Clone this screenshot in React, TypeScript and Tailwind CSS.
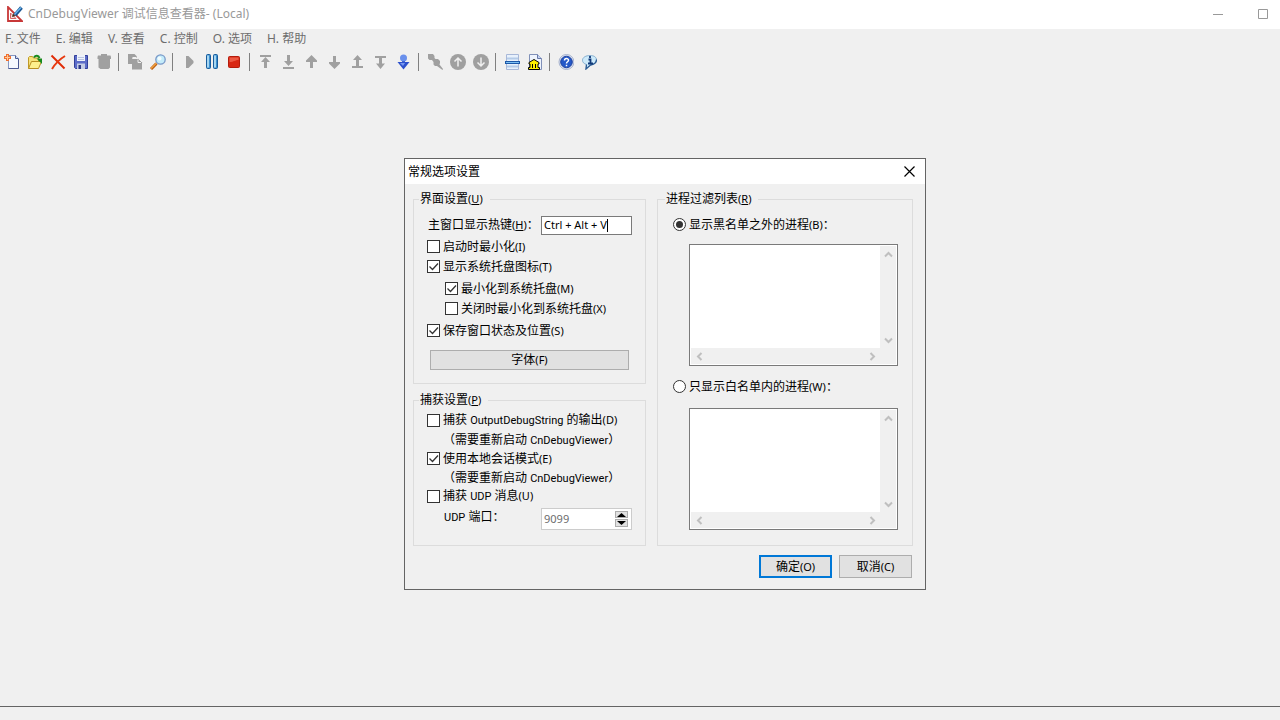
import { useState, type ReactNode } from "react";

const zh = "font-['Noto_Sans','Noto_Sans_CJK_SC',sans-serif]";

// Dialog labels set Latin text one pixel smaller than the Chinese around it.
function En({ children }: { children: ReactNode }) {
  return <span className="text-[11px]">{children}</span>;
}

function Word({ children }: { children: ReactNode }) {
  return <span className="font-['Roboto',sans-serif] text-[11px]">{children}</span>;
}

function Key({ k, line = false }: { k: string; line?: boolean }) {
  return <En>({line ? <u className="underline-offset-1">{k}</u> : k})</En>;
}

/* ---------- toolbar icons, 16x16 ---------- */

function Icon({ children }: { children: ReactNode }) {
  return (
    <svg width="16" height="16" viewBox="0 0 16 16" aria-hidden="true">
      {children}
    </svg>
  );
}

const gray = "#a0a0a0";

const icons: Record<string, ReactNode> = {
  new: (
    <>
      <path d="M4.500 1.500h7l3 3v10h-10z" fill="#f5f9ff" stroke="#8796c0" />
      <path d="M11.500 1.500v3h3" fill="#cfdcf5" stroke="#4a5a94" />
      <path d="M14.500 5v9.500h-10" fill="none" stroke="#4a5a94" />
      <path d="M3.500 0v7M0 3.500h7" stroke="#f07030" strokeWidth="3" />
      <path d="M3.500 1v5M1 3.500h5" stroke="#ffc898" />
    </>
  ),
  open: (
    <>
      <path d="M1.500 14.500v-11l1-1h3l1 1.500h5v3" fill="#f6e27a" stroke="#c09a28" />
      <path d="M1.500 14.500l3-7h10l-3 7z" fill="#fdf08c" stroke="#b88f20" />
      <path d="M7 3.500C8.500 1 11.500 1 12.500 4" fill="none" stroke="#178a1c" strokeWidth="2" />
      <path d="M9.500 4.500H15V10z" fill="#178a1c" />
    </>
  ),
  remove: (
    <>
      <path d="M1.500 1.500l13 13" stroke="#e02c08" strokeWidth="2" />
      <path d="M15 2C10 5 5 10 2 15" fill="none" stroke="#e83a10" strokeWidth="2" />
    </>
  ),
  save: (
    <>
      <path d="M1.500 1.500h13v13h-12l-1-1z" fill="#5c6cc8" stroke="#33409a" />
      <path d="M4 1h8v6H4z" fill="#eef2fb" />
      <path d="M5 3.500h6M5 5.500h6" stroke="#b9c4e0" />
      <path d="M4 9.500h8V15H4z" fill="#c4cce4" />
      <path d="M5.500 11H8v4H5.500z" fill="#2c3888" />
    </>
  ),
  trash: (
    <path d="M5 0h6v1.500h3.500L15 3v2H1.500V3L2 1.500h3zM2.500 5h11.500v8.500L12.500 15h-8L2.500 13.500z" fill={gray} />
  ),
  copy: (
    <>
      <path d="M1 0h6.500L10 2.500V10H1z" fill={gray} />
      <path d="M5.500 4.500h6l4 4v7h-10z" fill={gray} stroke="#f0f0f0" />
      <path d="M5 5h6l4 4v6.500H5z" fill={gray} />
      <path d="M5.500 3.500h4M11 5.500v3h3" fill="none" stroke="#f0f0f0" />
    </>
  ),
  find: (
    <>
      <path d="M1 15l5.500-5.500" stroke="#b85c10" strokeWidth="3" />
      <path d="M1 14.500l5.500-5.500" stroke="#f0a040" strokeWidth="1.500" />
      <circle cx="10.500" cy="5.500" r="4.700" fill="#c4ecfa" stroke="#7898c8" strokeWidth="1.300" />
      <circle cx="9.500" cy="4.500" r="2" fill="#f2fcff" />
    </>
  ),
  play: <path d="M5 2h2.500l5 5v2l-5 5H5z" fill={gray} />,
  pause: (
    <>
      <rect x="2.500" y=".500" width="4" height="14" rx="1" fill="#3c90d0" stroke="#185c9c" />
      <rect x="9.500" y=".500" width="4" height="14" rx="1" fill="#3c90d0" stroke="#185c9c" />
      <path d="M4 1.500v12M11 1.500v12" stroke="#c8ecfc" strokeWidth="1.500" />
    </>
  ),
  stop: (
    <>
      <rect x="1.500" y="2.500" width="11" height="11" rx="1" fill="#d82814" stroke="#b41c0c" />
      <path d="M2.500 8V3.500h9V6C8 6 7 8 2.500 8z" fill="#ec5a44" />
    </>
  ),
  top: <path d="M2 1h11v2H2zM7.500 3L12 8H9v6H6V8H3z" fill={gray} />,
  bottom: <path d="M2 13h11v2H2zM6 1h3v6h3l-4.500 5L3 7h3z" fill={gray} />,
  up: <path d="M7.500 1L13 6.500V8H9v6H6V8H2V6.500z" fill={gray} />,
  down: <path d="M6 2h3v6h4v1.500L7.500 15 2 9.500V8h4z" fill={gray} />,
  prevMark: <path d="M2 12h11v2H2zM7.500 1L12 6H9v6H6V6H3z" fill={gray} />,
  nextMark: <path d="M2 2h11v2H2zM6 4h3v5.500h3L7.500 15 3 9.500h3z" fill={gray} />,
  locate: (
    <>
      <circle cx="7.500" cy="4" r="3.500" fill="#6a90ec" />
      <path d="M6 7h3v3H6z" fill="#4468d4" />
      <path d="M1.500 8h12l-6 7.500z" fill="#2c50cc" />
      <path d="M4 9h5l-2 3z" fill="#7898f0" />
    </>
  ),
  pin: <path d="M1 0h5l1.500 2v2l1 1H11l2 2v2l-.500 1.500L16 15l-.500 1L10 12H8l-1.500-1.500V8L5 6H2.500L1 4.500z" fill={gray} />,
  circleUp: (
    <>
      <circle cx="8" cy="8" r="8" fill={gray} />
      <path d="M8 4v8.500M4.500 7.500L8 4l3.500 3.500" fill="none" stroke="#f0f0f0" strokeWidth="1.500" />
    </>
  ),
  circleDown: (
    <>
      <circle cx="8" cy="8" r="8" fill={gray} />
      <path d="M8 3.500V12M4.500 8.500L8 12l3.500-3.500" fill="none" stroke="#f0f0f0" strokeWidth="1.500" />
    </>
  ),
  split: (
    <>
      <path d="M2.500.500h12v15h-12z" fill="#e8f1fc" stroke="#a8b8d8" />
      <path d="M3 4.500h11M3 12.500h11" stroke="#b4cbe8" strokeWidth="2" />
      <rect x="1.500" y="7.500" width="14" height="2" fill="#7cc0f4" stroke="#1c58a8" />
    </>
  ),
  home: (
    <>
      <path d="M2.500.500h8l4 4v11h-12z" fill="#eef3fc" stroke="#8090b8" />
      <path d="M10.500.500v4h4" fill="#c4d2f0" stroke="#6878a8" />
      <path d="M2 8.500L7 5.500l5 3V10h-1v3.500h1.500v2h-11v-2H3V10H2z" fill="#fff000" stroke="#000" />
      <path d="M5.500 10v4M8.500 10v4" stroke="#000" />
    </>
  ),
  help: (
    <>
      <circle cx="8.500" cy="8" r="7.500" fill="#e6eaf4" stroke="#a4b0cc" />
      <circle cx="8.500" cy="8" r="5.800" fill="#2458c8" stroke="#1c409c" />
      <path d="M6.500 6.500C6.500 4 10.500 4 10.500 6.300c0 1.500-2 1.500-2 3.200M8.500 10.700v1.500" fill="none" stroke="#fff" strokeWidth="1.500" />
    </>
  ),
  about: (
    <>
      <path d="M9 1.500c4 0 6.500 1.600 6.500 4.500S12.500 10.500 9.500 11L5 15l.500-4.500C3 9.700 1.500 8.500 1.500 6.200 1.500 3.300 5 1.500 9 1.500z" fill="#cdeafa" stroke="#88b0d0" />
      <path d="M15.500 5.500c0 3.500-3 5-6 5.500L5 15l.500-4.500" fill="none" stroke="#2c5c94" strokeWidth="1.300" />
      <path d="M9 2v2M7.500 5.500h2v4M7 9.500h5" fill="none" stroke="#103878" strokeWidth="1.800" />
    </>
  ),
};

const toolbar: [string, string][][] = [
  [["new", "新建"], ["open", "打开"], ["remove", "删除"], ["save", "保存"], ["trash", "清空"]],
  [["copy", "复制"], ["find", "查找"]],
  [["play", "开始"], ["pause", "暂停"], ["stop", "停止"]],
  [["top", "首条"], ["bottom", "末条"], ["up", "上一条"], ["down", "下一条"], ["prevMark", "上一组"], ["nextMark", "下一组"], ["locate", "定位"]],
  [["pin", "书签"], ["circleUp", "上一书签"], ["circleDown", "下一书签"]],
  [["split", "分隔"], ["home", "主页"]],
  [["help", "帮助"], ["about", "关于"]],
];

const menus = ["F. 文件", "E. 编辑", "V. 查看", "C. 控制", "O. 选项", "H. 帮助"];

/* ---------- form controls ---------- */

function Check({ children, defaultChecked = false }: { children: ReactNode; defaultChecked?: boolean }) {
  return (
    <label className="flex h-[19px] items-center gap-[3px] whitespace-nowrap">
      <span className="grid">
        <input
          type="checkbox"
          defaultChecked={defaultChecked}
          className="peer col-start-1 row-start-1 size-[13px] appearance-none border border-[#333] bg-white"
        />
        <svg
          viewBox="0 0 13 13"
          className="pointer-events-none invisible col-start-1 row-start-1 size-[13px] peer-checked:visible"
        >
          <path d="M2.500 6.500l3 3 5.500-6" fill="none" stroke="#333" strokeWidth="1.300" />
        </svg>
      </span>
      <span>{children}</span>
    </label>
  );
}

function Radio({ children, checked, onChange }: { children: ReactNode; checked: boolean; onChange: () => void }) {
  return (
    <label className="flex h-[19px] items-center gap-[3px] whitespace-nowrap">
      <span className="grid place-items-center">
        <input
          type="radio"
          name="filter"
          checked={checked}
          onChange={onChange}
          className="peer col-start-1 row-start-1 size-[13px] appearance-none rounded-full border border-[#333] bg-white"
        />
        <span className="pointer-events-none invisible col-start-1 row-start-1 size-[7px] rounded-full bg-[#333] peer-checked:visible" />
      </span>
      <span>{children}</span>
    </label>
  );
}

function Arrow({ d, label }: { d: string; label: string }) {
  return (
    <button type="button" aria-label={label} className="grid size-4 place-items-center">
      <svg width="9" height="9" viewBox="0 0 9 9">
        <path d={d} fill="none" stroke="#bfbfbf" strokeWidth="2" />
      </svg>
    </button>
  );
}

function ListBox({ label }: { label: string }) {
  return (
    <div className="ml-4 grid h-[122px] grid-cols-[1fr_16px] grid-rows-[1fr_16px] border border-[#7a7a7a] bg-white p-px">
      <textarea aria-label={label} className="resize-none bg-white outline-none" />
      <div className="flex flex-col justify-between bg-[#f0f0f0]">
        <Arrow label="向上滚动" d="M1 6.500L4.500 3 8 6.500" />
        <Arrow label="向下滚动" d="M1 2.500L4.500 6 8 2.500" />
      </div>
      <div className="flex justify-between bg-[#f0f0f0]">
        <Arrow label="向左滚动" d="M6.500 1L3 4.500 6.500 8" />
        <Arrow label="向右滚动" d="M2.500 1L6 4.500 2.500 8" />
      </div>
      <div className="bg-[#f0f0f0]" />
    </div>
  );
}

function Group({ title, k, className, children }: { title: string; k: string; className: string; children: ReactNode }) {
  return (
    <fieldset className={`border border-[#dcdcdc] ${className}`}>
      <legend className="-ml-2 h-[18px] pl-px pr-[7px] leading-[18px]">
        {title}
        <Key k={k} line />
      </legend>
      {children}
    </fieldset>
  );
}

function OptionsDialog() {
  const [filter, setFilter] = useState<"black" | "white">("black");
  return (
    <form
      role="dialog"
      aria-label="常规选项设置"
      className="w-[522px] border border-[#646464] bg-[#f0f0f0] text-[12px] leading-[18px] text-black"
    >
      <div className="flex h-[25px] items-center justify-between bg-white pl-[3px] pr-[10px]">
        <h2 className="leading-4">常规选项设置</h2>
        <button type="button" aria-label="关闭">
          <svg width="11" height="11" viewBox="0 0 11 11">
            <path d="M.500.500l10 10M10.500.500l-10 10" stroke="#000" strokeWidth="1.200" />
          </svg>
        </button>
      </div>

      <div className="flex gap-[11px] pl-2 pr-3 pt-[6px]">
        <div className="flex w-[233px] flex-col gap-[7px]">
          <Group title="界面设置" k="U" className="px-[13px] pb-[13px] pt-[7px]">
            <div className="mb-[2px] flex h-5 items-center justify-between">
              <label htmlFor="hotkey" className="whitespace-nowrap pl-px">
                主窗口显示热键
                <Key k="H" line />：
              </label>
              <div className="flex h-[19px] w-[91px] items-center border border-[#7a7a7a] bg-white pl-[2px]">
                <input
                  id="hotkey"
                  defaultValue="Ctrl + Alt + V"
                  className="field-sizing-content text-[11px] outline-none"
                />
                <span className="h-[13px] w-px bg-black" />
              </div>
            </div>
            <div className="flex flex-col gap-px">
              <Check>启动时最小化<Key k="I" /></Check>
              <Check defaultChecked>显示系统托盘图标<Key k="T" /></Check>
              <div className="my-[2px] flex flex-col gap-px pl-[18px]">
                <Check defaultChecked>最小化到系统托盘<Key k="M" /></Check>
                <Check>关闭时最小化到系统托盘<Key k="X" /></Check>
              </div>
              <Check defaultChecked>保存窗口状态及位置<Key k="S" /></Check>
            </div>
            <div className="flex pl-[3px] pr-[3px] pt-[10px]">
              <button type="button" className="h-5 flex-1 border border-[#adadad] bg-[#e1e1e1] leading-[18px]">
                字体<Key k="F" />
              </button>
            </div>
          </Group>

          <Group title="捕获设置" k="P" className="px-[13px] pb-[15px] pt-[2px]">
            <Check>捕获 <Word>OutputDebugString</Word> 的输出<Key k="D" /></Check>
            <p className="h-[19px] whitespace-nowrap pl-4 leading-5">（需要重新启动 <Word>CnDebugViewer</Word>）</p>
            <Check defaultChecked>使用本地会话模式<Key k="E" /></Check>
            <p className="h-[19px] whitespace-nowrap pl-4 leading-5">（需要重新启动 <Word>CnDebugViewer</Word>）</p>
            <Check>捕获 <Word>UDP</Word> 消息<Key k="U" /></Check>
            <div className="mt-[2px] flex items-start justify-between">
              <label htmlFor="port" className="whitespace-nowrap pl-[17px]">
                <Word>UDP</Word> 端口：
              </label>
              <div className="flex h-[22px] w-[91px] items-center border border-[#ccc] bg-white pl-[2px] pr-[3px]">
                <input
                  id="port"
                  disabled
                  defaultValue="9099"
                  className="min-w-0 flex-1 text-[11px] text-[#6d6d6d]"
                />
                <div className="flex flex-col gap-px">
                  <button type="button" aria-label="增加" className="grid h-[7px] w-[13px] place-items-center border border-[#adadad] bg-[#e1e1e1]">
                    <svg width="9" height="4" viewBox="0 0 9 4"><path d="M0 4l4.500-4L9 4z" /></svg>
                  </button>
                  <button type="button" aria-label="减少" className="grid h-[8px] w-[13px] place-items-center border border-[#adadad] bg-[#e1e1e1]">
                    <svg width="9" height="4" viewBox="0 0 9 4"><path d="M0 0l4.500 4L9 0z" /></svg>
                  </button>
                </div>
              </div>
            </div>
          </Group>
        </div>

        <Group title="进程过滤列表" k="R" className="min-w-0 flex-1 pb-[15px] pl-[15px] pr-[14px] pt-[7px]">
          <div className="flex flex-col">
            <Radio checked={filter === "black"} onChange={() => setFilter("black")}>
              显示黑名单之外的进程<Key k="B" />：
            </Radio>
            <div className="pb-[11px] pt-[10px]">
              <ListBox label="黑名单" />
            </div>
            <Radio checked={filter === "white"} onChange={() => setFilter("white")}>
              只显示白名单内的进程<Key k="W" />：
            </Radio>
            <div className="pt-3">
              <ListBox label="白名单" />
            </div>
          </div>
        </Group>
      </div>

      <div className="flex justify-end gap-[7px] pb-[11px] pr-[13px] pt-[9px]">
        <button type="button" className="h-[23px] w-[73px] border-2 border-[#0078d7] bg-[#e1e1e1]">
          确定<Key k="O" />
        </button>
        <button type="button" className="h-[23px] w-[73px] border border-[#adadad] bg-[#e1e1e1]">
          取消<Key k="C" />
        </button>
      </div>
    </form>
  );
}

export default function App() {
  return (
    <div className={`flex min-h-screen flex-col bg-[#f0f0f0] text-[12px] leading-[18px] ${zh}`}>
      <header className="flex h-[29px] items-center bg-white pb-[2px] pl-[7px] pr-3 text-[#999]">
        <svg width="16" height="16" viewBox="0 0 16 16" aria-hidden="true">
          <path d="M1 1v14h14z" fill="#fff" stroke="#c83838" strokeWidth="1.800" />
          <path d="M3.500 7v5.500H9z" fill="#f6dada" stroke="#d86464" />
          <path d="M14.500 1.500L8 9" stroke="#185490" strokeWidth="3.500" />
          <path d="M14 1.500L7.500 8.500" stroke="#6cb4ec" strokeWidth="1.500" />
          <path d="M8.500 10L5 11l1-3.500z" fill="#3c3420" />
        </svg>
        <h1 className="flex-1 pl-[5px]">CnDebugViewer 调试信息查看器- (Local)</h1>
        <div className="flex items-center gap-[35px]">
          <button type="button" aria-label="最小化">
            <svg width="10" height="10" viewBox="0 0 10 10"><path d="M0 5.500h10" stroke="#999" /></svg>
          </button>
          <button type="button" aria-label="最大化">
            <svg width="10" height="10" viewBox="0 0 10 10"><path d="M.500.500h9v9h-9z" fill="none" stroke="#999" /></svg>
          </button>
        </div>
      </header>

      <nav className="flex h-5 items-center gap-[15px] pl-[5px] text-[#6d6d6d]">
        {menus.map((m) => (
          <button key={m} type="button" className="whitespace-nowrap">{m}</button>
        ))}
      </nav>

      <div role="toolbar" className="flex h-[26px] items-center">
        {toolbar.map((group, i) => (
          <div key={i} className="flex items-center">
            {i > 0 && <span className="mx-[3px] h-[18px] w-[2px] border-l border-[#808080]" />}
            {group.map(([name, label]) => (
              <button key={name} type="button" title={label} aria-label={label} className="flex h-6 w-[23px] items-center justify-end pr-[3px]">
                <Icon>{icons[name]}</Icon>
              </button>
            ))}
          </div>
        ))}
      </div>

      <main className="flex flex-1 items-start justify-center pl-[50px] pt-[83px]">
        <OptionsDialog />
      </main>

      <footer className="h-[14px] border-t border-[#646464]" />
    </div>
  );
}
